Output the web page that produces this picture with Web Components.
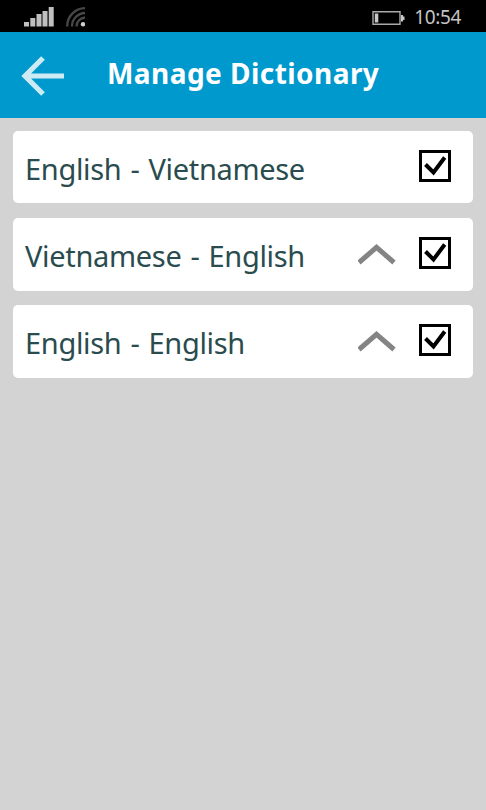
<!DOCTYPE html>
<html lang="en"><head><meta charset="utf-8"><title>Manage Dictionary</title>
<style>html,body{margin:0;height:100%;background:#d3d3d3;overflow:hidden}</style></head>
<body><dictionary-app></dictionary-app>
<script>
const define = (name, html) => {
  const t = document.createElement('template');
  t.innerHTML = html;
  customElements.define(name, class extends HTMLElement {
    constructor() {
      super();
      this.attachShadow({mode: 'open'}).append(t.content.cloneNode(true));
    }
  });
};

define('status-bar', `<style>
:host{display:flex;height:32px;box-sizing:border-box;background:#000;color:#c4c4c4;align-items:center;padding:0 25px 0 24px;font-size:19px}
svg{display:block}.wifi{margin-left:12px}.battery{margin-left:auto}
time{margin-left:9px;line-height:32px;letter-spacing:-.35px;padding-top:2px}
</style>
<svg width="30" height="32" fill="#c0c0c0"><path d="M0 22h5v4.500H0zM6.300 18h5v8.500h-5zM12.500 14h5v12.500h-5zM18.500 11h5v15.500h-5zM24.700 7h5v19.500h-5z"/></svg>
<svg class="wifi" width="19" height="32" fill="none" stroke="#484848" stroke-width="2.300"><path d="M1.200 26.500A18 18 0 0 1 19 8.200M6 26.500A13.300 13.300 0 0 1 19 13M10.500 26.500A9 9 0 0 1 19 17.500"/><circle cx="17" cy="24.300" r="2.200" fill="#d0d0d0" stroke="none"/></svg>
<svg class="battery" width="34" height="32"><path d="M2 11.700h27v12.600H2z" fill="none" stroke="#aaa" stroke-width="1.400"/><path d="M3.800 13.500h3.500v9H3.800zM30 15h2v1.500h1.500v3.500H32v1.500h-2z" fill="#c8c8c8"/></svg>
<time>10:54</time>`);

define('title-bar', `<style>
:host{display:flex;height:85.500px;background:#0099ce;align-items:flex-start}
svg{display:block;flex:none}
h1{margin:0 0 0 27px;padding-top:21px;font-size:28px;line-height:40px;font-weight:700;color:#fff;white-space:nowrap;letter-spacing:.45px}
</style>
<svg width="80" height="85" fill="none" stroke="#cdebf5" stroke-width="5.200"><path d="M64 44H26M43 26L25 44L43 62"/></svg>
<h1><slot></slot></h1>`);

define('check-box', `<style>:host{display:block}svg{display:block}</style>
<svg width="32" height="32" fill="none" stroke="#000"><path d="M1.500 1.500h29v29h-29z" stroke-width="3"/><path d="M6.500 14.500L14.500 22.500L25.700 7.500" stroke-width="4"/></svg>`);

define('chevron-up', `<style>:host{display:block}svg{display:block}</style>
<svg width="38" height="22" fill="none" stroke="#848484" stroke-width="5"><path d="M1 18.500L18.500 3.300L36 18.500"/></svg>`);

define('dictionary-row', `<style>
:host{display:flex;height:72.700px;background:#fff;border-radius:5px;color:#2a4c4e;box-sizing:border-box;padding:0 22px 0 12px;align-items:flex-start}
.name{font-size:29px;line-height:40px;padding-top:18px;white-space:nowrap;flex:1;letter-spacing:-.32px;word-spacing:1.800px}
chevron-up{margin:26px 23px 0 0}check-box{margin-top:19px}
:host(:not([movable])) chevron-up{display:none}
</style><div class="name"><slot></slot></div><chevron-up></chevron-up><check-box></check-box>`);

define('dictionary-app', `<style>
:host{display:flex;flex-direction:column;height:100vh;background:#d3d3d3;font-family:"Noto Sans","Open Sans",sans-serif}
main{display:flex;flex-direction:column;gap:14.500px;padding:13.200px 13.500px 0 13px}
</style>
<status-bar></status-bar><title-bar>Manage Dictionary</title-bar>
<main><dictionary-row>English - Vietnamese</dictionary-row><dictionary-row movable>Vietnamese - English</dictionary-row><dictionary-row movable>English - English</dictionary-row></main>`);
</script></body></html>
